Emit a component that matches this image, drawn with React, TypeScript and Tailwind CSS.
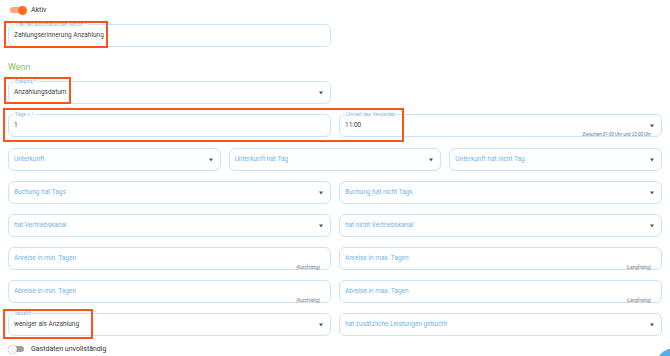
import React from 'react';

const font = { fontFamily: 'Roboto, "Noto Sans", sans-serif' };

function Caret() {
  return <span className="absolute right-[7px] top-1/2 -translate-y-1/2 w-0 h-0 border-l-[2.5px] border-r-[2.5px] border-t-[3px] border-l-transparent border-r-transparent border-t-[#555]" />;
}

function Field({
  label,
  value,
  placeholder,
  select,
  helper,
  className = '',
}: {
  label?: string;
  value?: string;
  placeholder?: string;
  select?: boolean;
  helper?: string;
  className?: string;
}) {
  return (
    <div className={`relative h-[23px] rounded-[6px] border border-[#c9e4f6] flex items-center px-[5px] ${className}`}>
      {label && (
        <span className="absolute -top-[4px] left-[5px] bg-white px-[1px] text-[5px] leading-[7px] text-[#7bbbe8]">
          {label}
        </span>
      )}
      {value ? (
        <span className="text-[6.5px] text-[#444] mt-[1px]">{value}</span>
      ) : (
        <span className="text-[6.5px] text-[#6fb4e8]">{placeholder}</span>
      )}
      {select && <Caret />}
      {helper && (
        <span className="absolute right-[10px] bottom-[-2px] text-[4.5px] leading-[6px] text-[#777]">{helper}</span>
      )}
    </div>
  );
}

function Toggle({ on }: { on: boolean }) {
  return (
    <div className="relative w-[15px] h-[8px] flex items-center">
      <div className={`w-[14px] h-[6px] rounded-full ${on ? 'bg-[#f6a77f]' : 'bg-[#9e9e9e]'}`} />
      <div
        className={`absolute w-[9px] h-[9px] rounded-full ${on ? 'right-[-2px] bg-[#ff6a1f]' : 'left-[-2px] bg-[#f5f5f5] shadow-[0_0_1px_rgba(0,0,0,0.5)]'}`}
      />
    </div>
  );
}

function Mark({ className }: { className: string }) {
  return <div className={`absolute border-2 border-[#ff5218] pointer-events-none ${className}`} />;
}

export default function App() {
  return (
    <div className="relative w-[670px] h-[356px] bg-white overflow-hidden" style={font}>
      <div className="flex flex-col px-[8px]">
        <div className="flex items-center gap-[6px] h-[20px] pl-[2px]">
          <Toggle on />
          <span className="text-[7px] text-[#333]">Aktiv</span>
        </div>
        <div className="mt-[4px] w-[323px]">
          <Field label="Titel der automatischen Aktion *" value="Zahlungserinnerung Anzahlung" />
        </div>
        <h2 className="mt-[14px] h-[13px] text-[9px] leading-[13px] text-[#8bc34a]">Wenn</h2>
        <div className="mt-[7px] w-[323px]">
          <Field label="Ereignis *" value="Anzahlungsdatum" select />
        </div>

        <div className="mt-[10px] grid grid-cols-2 gap-[8px]">
          <Field label="Tage + / -" value="1" />
          <Field label="Uhrzeit des Versandes" value="11:00" select helper="Zwischen 01:00 Uhr und 23:00 Uhr" />
        </div>

        <div className="mt-[11px] grid grid-cols-3 gap-[8px]">
          <Field placeholder="Unterkunft" select />
          <Field placeholder="Unterkunft hat Tag" select />
          <Field placeholder="Unterkunft hat nicht Tag" select />
        </div>

        <div className="mt-[10px] grid grid-cols-2 gap-[8px]">
          <Field placeholder="Buchung hat Tags" select />
          <Field placeholder="Buchung hat nicht Tags" select />
        </div>

        <div className="mt-[10px] grid grid-cols-2 gap-[8px]">
          <Field placeholder="hat Vertriebskanal" select />
          <Field placeholder="hat nicht Vertriebskanal" select />
        </div>

        <div className="mt-[10px] grid grid-cols-2 gap-[8px]">
          <Field placeholder="Anreise in min. Tagen" helper="(Kurzfristig)" />
          <Field placeholder="Anreise in max. Tagen" helper="(Langfristig)" />
        </div>

        <div className="mt-[10px] grid grid-cols-2 gap-[8px]">
          <Field placeholder="Abreise in min. Tagen" helper="(Kurzfristig)" />
          <Field placeholder="Abreise in max. Tagen" helper="(Langfristig)" />
        </div>

        <div className="mt-[10px] grid grid-cols-2 gap-[8px]">
          <Field label="bezahlt" value="weniger als Anzahlung" select />
          <Field placeholder="hat zusätzliche Leistungen gebucht" select />
        </div>

        <div className="mt-[5px] flex items-center gap-[6px] h-[16px] pl-[2px]">
          <Toggle on={false} />
          <span className="text-[7px] text-[#333]">Gastdaten unvollständig</span>
        </div>
      </div>

      <Mark className="left-[4px] top-[21px] w-[104px] h-[27px]" />
      <Mark className="left-[4px] top-[77px] w-[67px] h-[27px]" />
      <Mark className="left-[3px] top-[108px] w-[401px] h-[34px]" />
      <Mark className="left-[3px] top-[309px] w-[90px] h-[30px]" />

      <div className="absolute left-[655px] top-[348px] w-[40px] h-[40px] rounded-full bg-[#5aaee8]" />
    </div>
  );
}
